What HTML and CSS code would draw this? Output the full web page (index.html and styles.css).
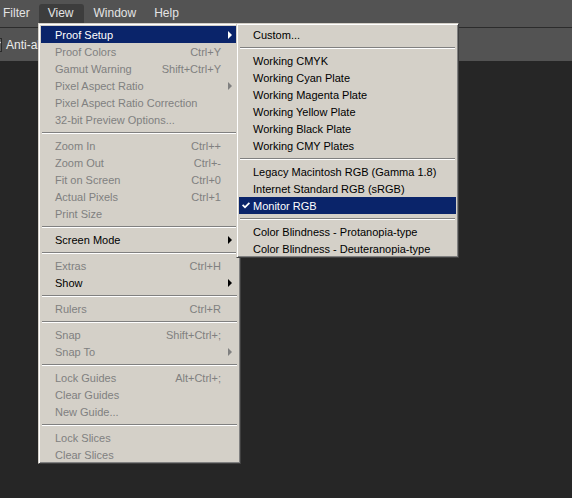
FILE: index.html
```html
<!DOCTYPE html>
<html>
<head>
<meta charset="utf-8">
<link rel="stylesheet" href="styles.css">
</head>
<body>
<div class="app">
  <div class="menubar">
    <span class="mb-item first">Filter</span>
    <span class="mb-item active">View</span>
    <span class="mb-item">Window</span>
    <span class="mb-item">Help</span>
  </div>
  <div class="optionsbar">
    <span class="chk"><svg width="8" height="8" viewBox="0 0 8 8"><path d="M0 3.5 L1.2 2.3 L3 4.1 L6.8 0.3 L8 1.5 L3 6.5 Z" fill="#e8e8e8"/></svg></span>
    <span class="opt-label">Anti-alias</span>
  </div>
  <div class="canvas"></div>

  <div class="menu main">
    <div class="row hl"><span class="lbl">Proof Setup</span><span class="key"></span><span class="arw"><i class="tri"></i></span></div>
    <div class="row dis"><span class="lbl">Proof Colors</span><span class="key">Ctrl+Y</span><span class="arw"></span></div>
    <div class="row dis"><span class="lbl">Gamut Warning</span><span class="key">Shift+Ctrl+Y</span><span class="arw"></span></div>
    <div class="row dis"><span class="lbl">Pixel Aspect Ratio</span><span class="key"></span><span class="arw"><i class="tri"></i></span></div>
    <div class="row dis"><span class="lbl">Pixel Aspect Ratio Correction</span><span class="key"></span><span class="arw"></span></div>
    <div class="row dis"><span class="lbl">32-bit Preview Options...</span><span class="key"></span><span class="arw"></span></div>
    <div class="sep"></div>
    <div class="row dis"><span class="lbl">Zoom In</span><span class="key">Ctrl++</span><span class="arw"></span></div>
    <div class="row dis"><span class="lbl">Zoom Out</span><span class="key">Ctrl+-</span><span class="arw"></span></div>
    <div class="row dis"><span class="lbl">Fit on Screen</span><span class="key">Ctrl+0</span><span class="arw"></span></div>
    <div class="row dis"><span class="lbl">Actual Pixels</span><span class="key">Ctrl+1</span><span class="arw"></span></div>
    <div class="row dis"><span class="lbl">Print Size</span><span class="key"></span><span class="arw"></span></div>
    <div class="sep"></div>
    <div class="row"><span class="lbl">Screen Mode</span><span class="key"></span><span class="arw"><i class="tri"></i></span></div>
    <div class="sep"></div>
    <div class="row dis"><span class="lbl">Extras</span><span class="key">Ctrl+H</span><span class="arw"></span></div>
    <div class="row"><span class="lbl">Show</span><span class="key"></span><span class="arw"><i class="tri"></i></span></div>
    <div class="sep"></div>
    <div class="row dis"><span class="lbl">Rulers</span><span class="key">Ctrl+R</span><span class="arw"></span></div>
    <div class="sep"></div>
    <div class="row dis"><span class="lbl">Snap</span><span class="key">Shift+Ctrl+;</span><span class="arw"></span></div>
    <div class="row dis"><span class="lbl">Snap To</span><span class="key"></span><span class="arw"><i class="tri"></i></span></div>
    <div class="sep"></div>
    <div class="row dis"><span class="lbl">Lock Guides</span><span class="key">Alt+Ctrl+;</span><span class="arw"></span></div>
    <div class="row dis"><span class="lbl">Clear Guides</span><span class="key"></span><span class="arw"></span></div>
    <div class="row dis"><span class="lbl">New Guide...</span><span class="key"></span><span class="arw"></span></div>
    <div class="sep"></div>
    <div class="row dis"><span class="lbl">Lock Slices</span><span class="key"></span><span class="arw"></span></div>
    <div class="row dis"><span class="lbl">Clear Slices</span><span class="key"></span><span class="arw"></span></div>
  </div>

  <div class="menu sub">
    <div class="srow"><span class="ck"></span><span class="lbl">Custom...</span></div>
    <div class="sep"></div>
    <div class="srow"><span class="ck"></span><span class="lbl">Working CMYK</span></div>
    <div class="srow"><span class="ck"></span><span class="lbl">Working Cyan Plate</span></div>
    <div class="srow"><span class="ck"></span><span class="lbl">Working Magenta Plate</span></div>
    <div class="srow"><span class="ck"></span><span class="lbl">Working Yellow Plate</span></div>
    <div class="srow"><span class="ck"></span><span class="lbl">Working Black Plate</span></div>
    <div class="srow"><span class="ck"></span><span class="lbl">Working CMY Plates</span></div>
    <div class="sep"></div>
    <div class="srow"><span class="ck"></span><span class="lbl">Legacy Macintosh RGB (Gamma 1.8)</span></div>
    <div class="srow"><span class="ck"></span><span class="lbl">Internet Standard RGB (sRGB)</span></div>
    <div class="srow hl"><span class="ck"><svg width="8" height="8" viewBox="0 0 8 8"><path d="M0 3.5 L1.2 2.3 L3 4.1 L6.8 0.3 L8 1.5 L3 6.5 Z" fill="#fff"/></svg></span><span class="lbl">Monitor RGB</span></div>
    <div class="sep"></div>
    <div class="srow"><span class="ck"></span><span class="lbl">Color Blindness - Protanopia-type</span></div>
    <div class="srow"><span class="ck"></span><span class="lbl">Color Blindness - Deuteranopia-type</span></div>
  </div>
</div>
</body>
</html>
```

FILE: styles.css
```css
html, body {
  margin: 0;
  padding: 0;
  background: #262626;
}
.app {
  position: relative;
  width: 572px;
  height: 498px;
  overflow: hidden;
  display: flex;
  flex-direction: column;
  font-family: "Liberation Sans", Arial, sans-serif;
}
.menubar {
  height: 23px;
  padding-top: 4px;
  background: #535353;
  border-bottom: 1px solid #2c2c2c;
  display: flex;
  align-items: flex-start;
}
.mb-item {
  height: 19px;
  line-height: 19px;
  padding: 0 9px;
  font-size: 12px;
  color: #e4e4e4;
  border-radius: 3px 3px 0 0;
}
.mb-item.first {
  padding-left: 3px;
}
.mb-item.active {
  background: #3d3d3d;
  padding: 0 11px 0 9px;
}
.optionsbar {
  height: 33px;
  background: #535353;
  display: flex;
  align-items: center;
}
.chk {
  width: 10px;
  height: 12px;
  margin-left: -10px;
  margin-right: 4px;
  border: 1px solid #2a2a2a;
  background: #5c5c5c;
  display: flex;
  align-items: center;
  justify-content: flex-end;
}
.opt-label {
  font-size: 12px;
  color: #ececec;
}
.canvas {
  flex: 1;
  background: #262626;
}

.menu {
  position: absolute;
  top: 23px;
  background: #d4d0c8;
  border: 1px solid;
  border-color: #d4d0c8 #404040 #404040 #d4d0c8;
  box-shadow: inset 1px 1px 0 #ffffff, inset -1px -1px 0 #808080;
  padding: 2px 2px 1px 2px;
  box-sizing: border-box;
  font-size: 11px;
  color: #000;
}
.menu.main {
  left: 38px;
  width: 203px;
  height: 441px;
}
.menu.sub {
  left: 236px;
  width: 223px;
  height: 235px;
}
.row, .srow {
  height: 17px;
  display: flex;
  align-items: center;
  white-space: nowrap;
}
.row {
  padding: 0 6px 0 14px;
}
.row .lbl {
  flex: 1;
}
.row .key {
  text-align: right;
}
.row .arw {
  width: 11px;
  display: flex;
  justify-content: flex-end;
}
.tri {
  display: block;
  width: 0;
  height: 0;
  border-left: 4px solid #000;
  border-top: 4px solid transparent;
  border-bottom: 4px solid transparent;
}
.dis {
  color: #808080;
}
.dis .tri {
  border-left-color: #808080;
}
.hl {
  background: #0a246a;
  color: #ffffff;
}
.hl .tri {
  border-left-color: #ffffff;
}
.srow .ck {
  width: 14px;
  display: flex;
  justify-content: center;
  align-items: center;
}
.sep {
  height: 9px;
  display: flex;
  flex-direction: column;
  justify-content: center;
  padding: 0 1px;
}
.sep::before {
  content: "";
  display: block;
  height: 1px;
  background: #808080;
  border-bottom: 1px solid #ffffff;
}
```
